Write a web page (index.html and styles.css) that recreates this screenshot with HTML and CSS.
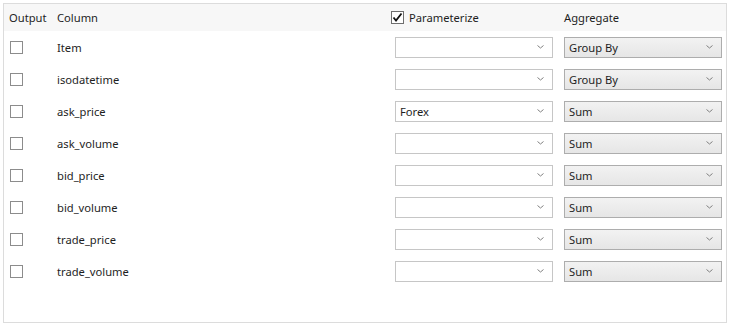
FILE: index.html
```html
<!DOCTYPE html>
<html>

<head>
  <meta charset="utf-8">
  <title>Columns</title>
  <link rel="stylesheet" href="styles.css">
</head>

<body>

  <div class="panel">
    <div class="row header">
      <div class="cell first">Output</div>
      <div class="cell">Column</div>
      <div class="cell param">
        <span class="check checked">
          <svg width="11" height="11" viewBox="0 0 11 11"><polyline points="1.5,5.5 4,8.5 9.5,1.5" fill="none" stroke="#111" stroke-width="1.8"/></svg>
        </span>
        Parameterize
      </div>
      <div class="cell">Aggregate</div>
    </div>

    <div id="rows"></div>
  </div>

  <script>
    const columns = [
      { name: "Item", param: "", agg: "Group By" },
      { name: "isodatetime", param: "", agg: "Group By" },
      { name: "ask_price", param: "Forex", agg: "Sum" },
      { name: "ask_volume", param: "", agg: "Sum" },
      { name: "bid_price", param: "", agg: "Sum" },
      { name: "bid_volume", param: "", agg: "Sum" },
      { name: "trade_price", param: "", agg: "Sum" },
      { name: "trade_volume", param: "", agg: "Sum" }
    ];

    const arrow = '<svg class="arrow" width="7" height="4" viewBox="0 0 7 4"><polyline points="0.5,0.5 3.5,3 6.5,0.5" fill="none" stroke="#808080" stroke-width="1"/></svg>';

    const list = document.getElementById("rows");
    columns.forEach(col => {
      const row = document.createElement("div");
      row.className = "row";
      row.innerHTML =
        '<div class="cell first"><span class="check"></span></div>' +
        '<div class="cell">' + col.name + '</div>' +
        '<div class="cell"><div class="combo edit"><span>' + col.param + '</span>' + arrow + '</div></div>' +
        '<div class="cell"><div class="combo pick"><span>' + col.agg + '</span>' + arrow + '</div></div>';
      list.appendChild(row);
    });
  </script>

</body>

</html>
```

FILE: styles.css
```css
body {
  margin: 0;
  padding: 3px 5px 5px 3px;
  background: #ffffff;
  font-family: 'Noto Sans', 'Open Sans', sans-serif;
  font-size: 11.2px;
  color: #1e1e1e;
}

.panel {
  border: 1px solid #dcdcdc;
  box-sizing: border-box;
  height: 320px;
}

.row {
  display: grid;
  grid-template-columns: 53px 334px 173px 1fr;
  height: 32px;
  align-items: center;
}

.row.header {
  height: 27px;
  background: #f7f7f7;
}

.cell {
  display: flex;
  align-items: center;
}

.cell.first {
  padding-left: 5px;
}

.row .cell.first .check {
  margin-left: 1px;
}

.cell.param {
  gap: 5px;
}

.check {
  width: 13px;
  height: 13px;
  box-sizing: border-box;
  border: 1px solid #8c8c8c;
  background: #ffffff;
  display: flex;
  align-items: center;
  justify-content: center;
}

.check.checked {
  border-color: #6e6e6e;
}

.combo {
  height: 21px;
  width: 158px;
  box-sizing: border-box;
  display: flex;
  align-items: center;
  justify-content: space-between;
  padding: 0 8px 0 4px;
}

.combo.edit {
  margin-left: 4px;
  background: #ffffff;
  border: 1px solid #c6c6c6;
}

.combo.pick {
  background: linear-gradient(#f2f2f2, #e6e6e6);
  border: 1px solid #adadad;
}

.arrow {
  flex: none;
}
```
